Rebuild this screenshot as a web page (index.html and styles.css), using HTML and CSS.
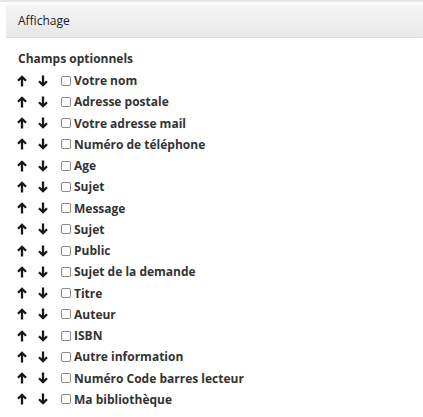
FILE: index.html
```html
<!DOCTYPE html>
<html>
<head>
<meta charset="utf-8">
<link rel="stylesheet" href="styles.css">
</head>
<body>
<div class="topline"></div>
<div class="panel">
  <div class="panel-heading">Affichage</div>
  <div class="panel-body">
    <div class="title">Champs optionnels</div>
    <ul class="fields">
      <li><svg class="arrow up" viewBox="0 0 10 12"><path d="M5 11.5V2M1 5.8L5 1.8L9 5.8"/></svg><svg class="arrow down" viewBox="0 0 10 12"><path d="M5 0.5V10M1 6.2L5 10.2L9 6.2"/></svg><span class="cb"></span><span class="label">Votre nom</span></li>
      <li><svg class="arrow up" viewBox="0 0 10 12"><path d="M5 11.5V2M1 5.8L5 1.8L9 5.8"/></svg><svg class="arrow down" viewBox="0 0 10 12"><path d="M5 0.5V10M1 6.2L5 10.2L9 6.2"/></svg><span class="cb"></span><span class="label">Adresse postale</span></li>
      <li><svg class="arrow up" viewBox="0 0 10 12"><path d="M5 11.5V2M1 5.8L5 1.8L9 5.8"/></svg><svg class="arrow down" viewBox="0 0 10 12"><path d="M5 0.5V10M1 6.2L5 10.2L9 6.2"/></svg><span class="cb"></span><span class="label">Votre adresse mail</span></li>
      <li><svg class="arrow up" viewBox="0 0 10 12"><path d="M5 11.5V2M1 5.8L5 1.8L9 5.8"/></svg><svg class="arrow down" viewBox="0 0 10 12"><path d="M5 0.5V10M1 6.2L5 10.2L9 6.2"/></svg><span class="cb"></span><span class="label">Numéro de téléphone</span></li>
      <li><svg class="arrow up" viewBox="0 0 10 12"><path d="M5 11.5V2M1 5.8L5 1.8L9 5.8"/></svg><svg class="arrow down" viewBox="0 0 10 12"><path d="M5 0.5V10M1 6.2L5 10.2L9 6.2"/></svg><span class="cb"></span><span class="label">Age</span></li>
      <li><svg class="arrow up" viewBox="0 0 10 12"><path d="M5 11.5V2M1 5.8L5 1.8L9 5.8"/></svg><svg class="arrow down" viewBox="0 0 10 12"><path d="M5 0.5V10M1 6.2L5 10.2L9 6.2"/></svg><span class="cb"></span><span class="label">Sujet</span></li>
      <li><svg class="arrow up" viewBox="0 0 10 12"><path d="M5 11.5V2M1 5.8L5 1.8L9 5.8"/></svg><svg class="arrow down" viewBox="0 0 10 12"><path d="M5 0.5V10M1 6.2L5 10.2L9 6.2"/></svg><span class="cb"></span><span class="label">Message</span></li>
      <li><svg class="arrow up" viewBox="0 0 10 12"><path d="M5 11.5V2M1 5.8L5 1.8L9 5.8"/></svg><svg class="arrow down" viewBox="0 0 10 12"><path d="M5 0.5V10M1 6.2L5 10.2L9 6.2"/></svg><span class="cb"></span><span class="label">Sujet</span></li>
      <li><svg class="arrow up" viewBox="0 0 10 12"><path d="M5 11.5V2M1 5.8L5 1.8L9 5.8"/></svg><svg class="arrow down" viewBox="0 0 10 12"><path d="M5 0.5V10M1 6.2L5 10.2L9 6.2"/></svg><span class="cb"></span><span class="label">Public</span></li>
      <li><svg class="arrow up" viewBox="0 0 10 12"><path d="M5 11.5V2M1 5.8L5 1.8L9 5.8"/></svg><svg class="arrow down" viewBox="0 0 10 12"><path d="M5 0.5V10M1 6.2L5 10.2L9 6.2"/></svg><span class="cb"></span><span class="label">Sujet de la demande</span></li>
      <li><svg class="arrow up" viewBox="0 0 10 12"><path d="M5 11.5V2M1 5.8L5 1.8L9 5.8"/></svg><svg class="arrow down" viewBox="0 0 10 12"><path d="M5 0.5V10M1 6.2L5 10.2L9 6.2"/></svg><span class="cb"></span><span class="label">Titre</span></li>
      <li><svg class="arrow up" viewBox="0 0 10 12"><path d="M5 11.5V2M1 5.8L5 1.8L9 5.8"/></svg><svg class="arrow down" viewBox="0 0 10 12"><path d="M5 0.5V10M1 6.2L5 10.2L9 6.2"/></svg><span class="cb"></span><span class="label">Auteur</span></li>
      <li><svg class="arrow up" viewBox="0 0 10 12"><path d="M5 11.5V2M1 5.8L5 1.8L9 5.8"/></svg><svg class="arrow down" viewBox="0 0 10 12"><path d="M5 0.5V10M1 6.2L5 10.2L9 6.2"/></svg><span class="cb"></span><span class="label">ISBN</span></li>
      <li><svg class="arrow up" viewBox="0 0 10 12"><path d="M5 11.5V2M1 5.8L5 1.8L9 5.8"/></svg><svg class="arrow down" viewBox="0 0 10 12"><path d="M5 0.5V10M1 6.2L5 10.2L9 6.2"/></svg><span class="cb"></span><span class="label">Autre information</span></li>
      <li><svg class="arrow up" viewBox="0 0 10 12"><path d="M5 11.5V2M1 5.8L5 1.8L9 5.8"/></svg><svg class="arrow down" viewBox="0 0 10 12"><path d="M5 0.5V10M1 6.2L5 10.2L9 6.2"/></svg><span class="cb"></span><span class="label">Numéro Code barres lecteur</span></li>
      <li><svg class="arrow up" viewBox="0 0 10 12"><path d="M5 11.5V2M1 5.8L5 1.8L9 5.8"/></svg><svg class="arrow down" viewBox="0 0 10 12"><path d="M5 0.5V10M1 6.2L5 10.2L9 6.2"/></svg><span class="cb"></span><span class="label">Ma bibliothèque</span></li>
    </ul>
  </div>
</div>
</body>
</html>
```
FILE: styles.css
```css
html, body {
  margin: 0;
  padding: 0;
  background: #fff;
}
body {
  font-family: "Open Sans", "DejaVu Sans", sans-serif;
  font-size: 12px;
  color: #333;
}
.topline {
  height: 2px;
  background: #e6e6e6;
}
.panel {
  margin: 3px 0 0 6px;
}
.panel-heading {
  height: 32px;
  line-height: 32px;
  padding-left: 12px;
  background: linear-gradient(#f5f5f5, #e8e8e8);
  border-bottom: 1px solid #dcdcdc;
  color: #222;
}
.panel-body {
  padding: 13px 0 0 12px;
}
.title {
  font-weight: bold;
  line-height: 16px;
  margin-bottom: 3px;
  color: #333;
}
.fields {
  list-style: none;
  margin: 0 0 0 -1px;
  padding: 0;
}
.fields li {
  display: flex;
  align-items: center;
  height: 21.25px;
  font-weight: bold;
  color: #333;
}
.arrow {
  flex: 0 0 10px;
  width: 10px;
  height: 12px;
  fill: none;
  stroke: #1d1420;
  stroke-width: 2.3;
}
.arrow.up {
  margin-right: 11px;
}
.arrow.down {
  margin-right: 13px;
}
.cb {
  flex: 0 0 10px;
  box-sizing: border-box;
  width: 10px;
  height: 10px;
  border: 1px solid #8a8a8a;
  border-radius: 2px;
  background: #fff;
  margin-right: 3px;
}
```
